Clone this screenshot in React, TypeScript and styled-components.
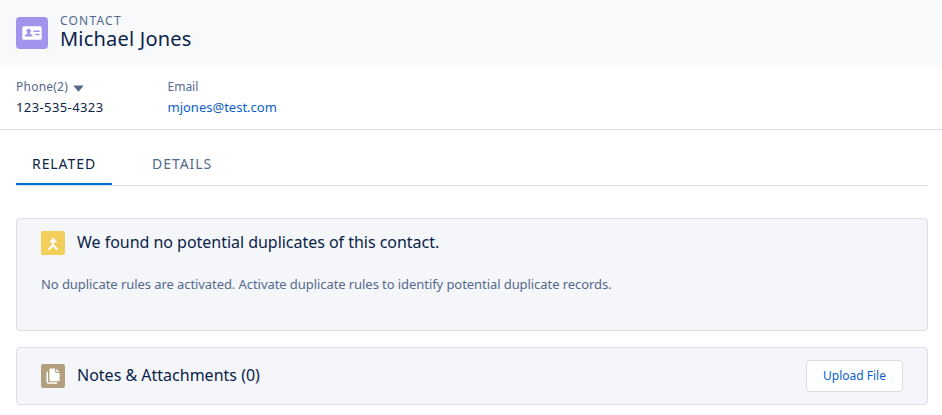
import React from 'react';
import styled, { createGlobalStyle } from 'styled-components';

const GlobalStyle = createGlobalStyle`
  * { box-sizing: border-box; }
  body {
    margin: 0;
    background: #fff;
    color: #0b2349;
    font-family: "Noto Sans", sans-serif;
    font-size: 13px;
  }
  h1, h2, p, dl, dt, dd { margin: 0; font-weight: 400; }
`;

const Page = styled.main`
  height: 415px;
  overflow: hidden;
`;

const Header = styled.header`
  display: flex;
  gap: 12px;
  height: 67px;
  padding: 13px 16px 0;
  background: #f7f9fb;
`;

const IconTile = styled.span<{ $size: number; $color: string }>`
  display: block;
  flex: none;
  width: ${(p) => p.$size}px;
  height: ${(p) => p.$size}px;
  border-radius: ${(p) => (p.$size > 24 ? 4 : 2)}px;
  background: ${(p) => p.$color};
  svg { display: block; width: 100%; height: 100%; }
`;

const HeaderIcon = styled.div`
  padding-top: 4px;
`;

const Eyebrow = styled.p`
  font-size: 12px;
  line-height: 15px;
  letter-spacing: 1.2px;
  color: #54698d;
`;

const Title = styled.h1`
  font-size: 20px;
  line-height: 22px;
  letter-spacing: 0.2px;
`;

const Highlights = styled.dl`
  display: flex;
  height: 63px;
  padding: 10px 16px 0;
  border-bottom: 1px solid #d8dde6;
`;

const Field = styled.div<{ $width?: number }>`
  width: ${(p) => (p.$width ? `${p.$width}px` : 'auto')};
`;

const FieldLabel = styled.dt<{ $spacing: number }>`
  display: flex;
  align-items: center;
  gap: 5px;
  font-size: 12px;
  line-height: 20px;
  letter-spacing: ${(p) => p.$spacing}px;
  color: #54698d;
`;

const FieldValue = styled.dd<{ $spacing: number }>`
  font-size: 13px;
  line-height: 20px;
  letter-spacing: ${(p) => p.$spacing}px;
`;

const Link = styled.a`
  color: #0b5fcc;
  text-decoration: none;
`;

const Tabs = styled.nav`
  display: flex;
  gap: 24px;
  height: 44px;
  margin: 12px 14px 0 16px;
  border-bottom: 1px solid #d8dde6;
`;

const Tab = styled.a<{ $active?: boolean }>`
  width: 96px;
  height: 43px;
  padding: 0 16px;
  font-size: 14px;
  line-height: 43px;
  letter-spacing: ${(p) => (p.$active ? 0.93 : 0.95)}px;
  white-space: nowrap;
  color: ${(p) => (p.$active ? '#0b2349' : '#54698d')};
  border-bottom: ${(p) => (p.$active ? '2px solid #0070d2' : '0')};
`;

const Card = styled.section<{ $height: number; $top: number }>`
  height: ${(p) => p.$height}px;
  margin: ${(p) => p.$top}px 14px 0 16px;
  padding: 12px 24px 0;
  border: 1px solid #d8dde6;
  border-radius: 4px;
  background: #f4f6f9;
`;

const CardHead = styled.div<{ $height: number }>`
  display: flex;
  align-items: center;
  gap: 12px;
  height: ${(p) => p.$height}px;
`;

const CardTitle = styled.h2<{ $spacing: number }>`
  flex: 1;
  padding-bottom: 2px;
  font-size: 16px;
  line-height: 22px;
  letter-spacing: ${(p) => p.$spacing}px;
`;

const CardText = styled.p`
  margin-top: 19px;
  font-size: 13px;
  line-height: 20px;
  letter-spacing: -0.07px;
  color: #54698d;
`;

const UploadButton = styled.button`
  width: 97px;
  height: 32px;
  padding: 0;
  border: 1px solid #d8dde6;
  border-radius: 4px;
  background: #fff;
  color: #0b5fcc;
  font: 12px/30px "Noto Sans", sans-serif;
`;

const ContactIcon = () => (
  <svg viewBox="0 0 32 32" fill="none">
    <rect x="6.3" y="9.2" width="19.4" height="13.6" rx="1.6" fill="#fff" />
    <path d="M12.700 11.700c-1.400 0-2.200 1-2.200 2.300 0 .9.4 1.700 1 2.100v.7l-1.700.8c-.6.3-.9.7-.9 1.300v.5h7.600v-.5c0-.6-.3-1-.9-1.300l-1.700-.8v-.7c.6-.4 1-1.200 1-2.100 0-1.300-.8-2.300-2.200-2.300z" fill="#a094ed" />
    <path d="M18 14.300h5M19.500 17.500h3.500" stroke="#a094ed" strokeWidth="1.600" strokeLinecap="round" />
  </svg>
);

const MergeIcon = () => (
  <svg viewBox="0 0 24 24" fill="none" stroke="#fff" strokeWidth="2" strokeLinecap="round" strokeLinejoin="round">
    <path d="M12 9v5l-3.800 4M12 14l3.800 4" />
    <path d="M12 7.300 8.900 10.900h6.200z" fill="#fff" strokeWidth="1" />
  </svg>
);

const FilesIcon = () => (
  <svg viewBox="0 0 24 24" fill="none">
    <path d="M9.700 4.600h4.400v3c0 .9.500 1.400 1.400 1.400h3.100v7c0 .8-.5 1.300-1.300 1.300H9.700c-.8 0-1.300-.5-1.300-1.300V5.900c0-.8.500-1.300 1.300-1.300z" fill="#fff" />
    <path d="M15.300 4.800l3.100 3.100h-2.600a.5.500 0 0 1-.5-.5z" fill="#fff" />
    <path d="M6.200 8.200v9.200c0 1.100.600 1.700 1.700 1.700h7.600" stroke="#fff" strokeWidth="1.500" strokeLinecap="round" />
  </svg>
);

const Caret = styled.svg`
  display: block;
  width: 11px;
  height: 7px;
  margin-top: 2px;
`;

export default function App() {
  return (
    <Page>
      <GlobalStyle />
      <Header>
        <HeaderIcon>
          <IconTile $size={32} $color="#a094ed"><ContactIcon /></IconTile>
        </HeaderIcon>
        <div>
          <Eyebrow>CONTACT</Eyebrow>
          <Title>Michael Jones</Title>
        </div>
      </Header>
      <Highlights>
        <Field $width={151.500}>
          <FieldLabel $spacing={0.23}>
            Phone(2)
            <Caret viewBox="0 0 11 7"><path d="M1 .400h9q.700.100.300.700L6 6.200q-.500.500-1 0L.700 1.100Q.300.500 1 .400z" fill="#54698d" /></Caret>
          </FieldLabel>
          <FieldValue $spacing={0.4}>123-535-4323</FieldValue>
        </Field>
        <Field>
          <FieldLabel $spacing={0}>Email</FieldLabel>
          <FieldValue $spacing={0}><Link>mjones@test.com</Link></FieldValue>
        </Field>
      </Highlights>
      <Tabs>
        <Tab $active>RELATED</Tab>
        <Tab>DETAILS</Tab>
      </Tabs>
      <Card $height={113} $top={32}>
        <CardHead $height={24}>
          <IconTile $size={24} $color="#f2cf5b"><MergeIcon /></IconTile>
          <CardTitle $spacing={-0.03}>We found no potential duplicates of this contact.</CardTitle>
        </CardHead>
        <CardText>No duplicate rules are activated. Activate duplicate rules to identify potential duplicate records.</CardText>
      </Card>
      <Card $height={58} $top={16}>
        <CardHead $height={32}>
          <IconTile $size={24} $color="#b29f7e"><FilesIcon /></IconTile>
          <CardTitle $spacing={0}>Notes &amp; Attachments (0)</CardTitle>
          <UploadButton>Upload File</UploadButton>
        </CardHead>
      </Card>
    </Page>
  );
}
